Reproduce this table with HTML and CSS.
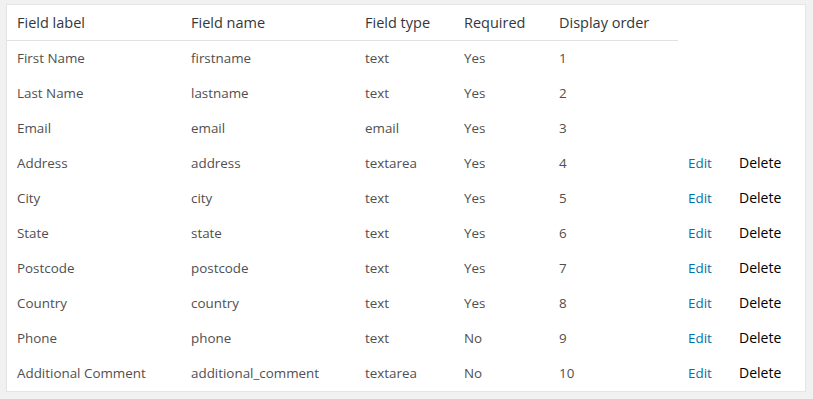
FILE: index.html
```html
<!DOCTYPE html>
<html lang="en">
<head>
  <meta charset="UTF-8" />
  <title>Custom Fields</title>
  <link rel="stylesheet" href="styles.css">
</head>
<body>

<div class="fields-box">
  <table class="fields-table">
    <colgroup>
      <col class="c-label">
      <col class="c-name">
      <col class="c-type">
      <col class="c-req">
      <col class="c-order">
      <col class="c-edit">
      <col class="c-del">
    </colgroup>
    <thead>
      <tr>
        <th>Field label</th>
        <th>Field name</th>
        <th>Field type</th>
        <th>Required</th>
        <th>Display order</th>
        <th class="blank"></th>
        <th class="blank"></th>
      </tr>
    </thead>
    <tbody>
      <tr><td>First Name</td><td>firstname</td><td>text</td><td>Yes</td><td>1</td><td></td><td></td></tr>
      <tr><td>Last Name</td><td>lastname</td><td>text</td><td>Yes</td><td>2</td><td></td><td></td></tr>
      <tr><td>Email</td><td>email</td><td>email</td><td>Yes</td><td>3</td><td></td><td></td></tr>
      <tr><td>Address</td><td>address</td><td>textarea</td><td>Yes</td><td>4</td><td><a class="edit-link" href="#">Edit</a></td><td><span class="del-link">Delete</span></td></tr>
      <tr><td>City</td><td>city</td><td>text</td><td>Yes</td><td>5</td><td><a class="edit-link" href="#">Edit</a></td><td><span class="del-link">Delete</span></td></tr>
      <tr><td>State</td><td>state</td><td>text</td><td>Yes</td><td>6</td><td><a class="edit-link" href="#">Edit</a></td><td><span class="del-link">Delete</span></td></tr>
      <tr><td>Postcode</td><td>postcode</td><td>text</td><td>Yes</td><td>7</td><td><a class="edit-link" href="#">Edit</a></td><td><span class="del-link">Delete</span></td></tr>
      <tr><td>Country</td><td>country</td><td>text</td><td>Yes</td><td>8</td><td><a class="edit-link" href="#">Edit</a></td><td><span class="del-link">Delete</span></td></tr>
      <tr><td>Phone</td><td>phone</td><td>text</td><td>No</td><td>9</td><td><a class="edit-link" href="#">Edit</a></td><td><span class="del-link">Delete</span></td></tr>
      <tr><td>Additional Comment</td><td>additional_comment</td><td>textarea</td><td>No</td><td>10</td><td><a class="edit-link" href="#">Edit</a></td><td><span class="del-link">Delete</span></td></tr>
    </tbody>
  </table>
</div>

</body>
</html>
```

FILE: styles.css
```css
body {
  margin: 0;
  padding: 4px 0 0 6px;
  background: #f1f1f1;
  font-family: 'Open Sans', sans-serif;
  color: #444;
}
.fields-box {
  width: 798px;
  background: white;
  border: 1px solid #e5e5e5;
  box-shadow: 0 1px 1px rgba(0,0,0,0.04);
}
.fields-table {
  width: 100%;
  border-collapse: collapse;
  table-layout: fixed;
}
.c-label { width: 174px; }
.c-name { width: 174px; }
.c-type { width: 99px; }
.c-req { width: 95px; }
.c-order { width: 129px; }
.c-edit { width: 51px; }
.fields-table th {
  height: 35px;
  padding: 0 10px;
  text-align: left;
  font-weight: normal;
  font-size: 14.5px;
  color: #32373c;
  border-bottom: 1px solid #e1e1e1;
}
.fields-table th.blank {
  border-bottom: none;
}
.fields-table td {
  height: 33px;
  padding: 0 10px 2px;
  font-size: 13.4px;
  color: #4f4f4f;
  white-space: nowrap;
}
.edit-link {
  color: #0073aa;
  text-decoration: none;
}
.del-link {
  color: #000;
  font-size: 14px;
}
```
